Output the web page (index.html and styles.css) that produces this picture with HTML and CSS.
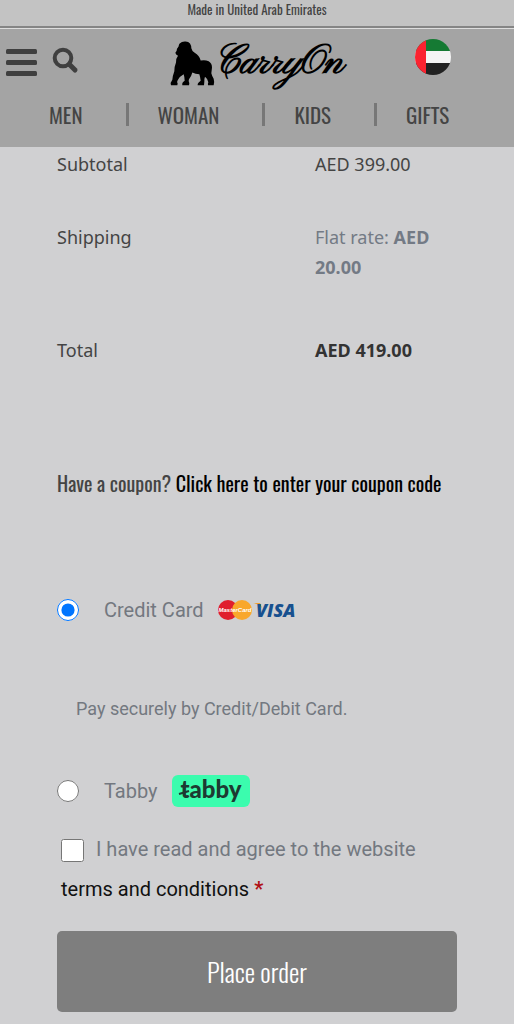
FILE: index.html
```html
<!DOCTYPE html>
<html lang="en">
<head>
    <meta charset="UTF-8">
    <meta name="viewport" content="width=device-width, initial-scale=1.0">
    <title>Checkout - CarryOn</title>
    <link rel="stylesheet" href="styles.css">
</head>
<body>
    <div class="topbar">Made in United Arab Emirates</div>

    <header class="header">
        <div class="header-row">
            <div class="header-tools">
                <button class="icon-button" type="button" aria-label="Menu">
                    <svg width="31" height="28" viewBox="0 0 31 28" fill="#3f3f3f">
                        <rect x="0" y="0" width="31" height="5" rx="1.5"/>
                        <rect x="0" y="11" width="31" height="5" rx="1.5"/>
                        <rect x="0" y="22" width="31" height="5" rx="1.5"/>
                    </svg>
                </button>
                <button class="icon-button" type="button" aria-label="Search">
                    <svg width="27" height="32" viewBox="0 0 27 32" fill="none" stroke="#3f3f3f">
                        <circle cx="11" cy="11" r="8.3" stroke-width="4"/>
                        <path d="M17.500 17.500L23 23" stroke-width="5" stroke-linecap="round"/>
                    </svg>
                </button>
            </div>

            <a class="logo" href="#" aria-label="CarryOn">
                <svg width="45" height="46" viewBox="25 20 135 137">
                    <path d="M54 30Q60 24 69 24Q80 23 85 30Q89 36 89 44Q91 53 99 58Q113 66 117 81Q130 78 141 83Q151 89 151 102Q150 112 149 119Q151 127 156 136Q159 146 156 155L139 155Q138 150 140 146Q138 136 130 130Q127 138 128 145L127 155L108 155Q107 149 117 142Q116 131 113 122Q101 122 92 117Q89 129 82 137Q79 144 83 149L82 155L62 155Q60 147 69 142Q69 131 66 122Q54 128 48 140Q44 147 48 150L47 155L28 155Q25 148 32 139Q33 126 38 113Q38 99 43 87Q43 74 49 67Q42 64 41 58Q46 53 46 46Q49 41 51 38Q51 33 54 30Z"/>
                </svg>
                <span class="logo-text">CarryOn</span>
            </a>

            <a class="flag" href="#" aria-label="United Arab Emirates">
                <svg width="36" height="36" viewBox="0 0 36 36">
                    <clipPath id="round"><circle cx="18" cy="18" r="18"/></clipPath>
                    <g clip-path="url(#round)">
                        <rect width="36" height="12" fill="#157a33"/>
                        <rect y="12" width="36" height="12" fill="#f4f4f4"/>
                        <rect y="24" width="36" height="12" fill="#222"/>
                        <rect width="11" height="36" fill="#fb2330"/>
                    </g>
                </svg>
            </a>
        </div>

        <nav>
            <ul class="nav">
                <li><a href="#">MEN</a></li>
                <li><a href="#">WOMAN</a></li>
                <li><a href="#">KIDS</a></li>
                <li><a href="#">GIFTS</a></li>
            </ul>
        </nav>
    </header>

    <main class="checkout">
        <table class="totals">
            <tr>
                <th>Subtotal</th>
                <td>AED 399.00</td>
            </tr>
            <tr class="shipping">
                <th>Shipping</th>
                <td>Flat rate: <b>AED</b> <b>20.00</b></td>
            </tr>
            <tr class="total">
                <th>Total</th>
                <td><b>AED 419.00</b></td>
            </tr>
        </table>

        <p class="coupon">Have a coupon? <a href="#">Click here to enter your coupon code</a></p>

        <form>
            <div class="method">
                <input type="radio" name="payment" id="credit" checked>
                <label for="credit">Credit Card</label>
                <svg class="cards" width="84" height="26" viewBox="0 0 84 26">
                    <circle cx="10" cy="13" r="10" fill="#e01f2d"/>
                    <circle cx="24" cy="13" r="10" fill="#f9a72b"/>
                    <text class="mastercard" x="17" y="15" text-anchor="middle">MasterCard</text>
                    <path d="M35 6h7l2 5q-3-4-9-5z" fill="#f0a030"/>
                    <text class="visa" x="38" y="20">VISA</text>
                </svg>
            </div>
            <p class="method-info">Pay securely by Credit/Debit Card.</p>

            <div class="method">
                <input type="radio" name="payment" id="tabby">
                <label for="tabby">Tabby</label>
                <svg class="tabby" width="78" height="32" viewBox="0 0 78 32">
                    <rect width="78" height="32" rx="6" fill="#3bfcae"/>
                    <text x="39" y="23" text-anchor="middle">tabby</text>
                    <path d="M7 19l10-3" stroke="#1d3a32" stroke-width="2"/>
                </svg>
            </div>

            <p class="terms">
                <input type="checkbox" id="terms">
                <label for="terms">I have read and agree to the website</label>
                <a href="#">terms and conditions</a> <span class="required">*</span>
            </p>

            <button class="place-order" type="submit">Place order</button>
        </form>
    </main>
</body>
</html>
```

FILE: styles.css
```css
* {
    box-sizing: border-box;
}
body {
    margin: 0;
    background: #d0d0d2;
    color: #444;
    font-family: Roboto, "Liberation Sans", sans-serif;
    font-size: 20px;
}
a {
    color: inherit;
    text-decoration: none;
}
.topbar,
.nav,
.coupon,
.place-order {
    font-family: Oswald, "Liberation Sans Narrow", "Roboto Condensed", sans-serif;
}
.topbar {
    height: 28px;
    background: #c3c3c3;
    border-bottom: 2px solid #858585;
    font-size: 13px;
    line-height: 18px;
    text-align: center;
}

/* header */
.header {
    background: #a4a4a4;
    border-top: 1px solid #ddd;
    height: 119px;
}
.header-row {
    display: grid;
    grid-template-columns: 1fr auto 1fr;
    align-items: center;
    height: 68px;
    padding: 0 6px;
}
.header-tools {
    display: flex;
    align-items: center;
    gap: 15px;
}
.icon-button {
    padding: 0;
    border: 0;
    background: none;
    cursor: pointer;
}
.icon-button svg,
.flag svg {
    display: block;
}
.logo {
    display: flex;
    align-items: center;
    color: #000;
}
.logo-text {
    font-family: "Pinyon Script", "Great Vibes", "Liberation Serif", serif;
    font-size: 40px;
    font-weight: bold;
    line-height: 46px;
}
.flag {
    justify-self: end;
    margin: 0 57px 12px 0;
}
.nav {
    display: flex;
    gap: 29px;
    margin: 0;
    padding: 6px 49px;
    list-style: none;
    font-size: 21px;
    line-height: 23px;
}
.nav li {
    padding-right: 43px;
    border-right: 3px solid #777;
}
.nav li:last-child {
    padding-right: 0;
    border-right: 0;
}

/* order totals */
.checkout {
    padding: 2px 57px 12px;
}
.totals {
    width: 100%;
    border-collapse: collapse;
    font-family: "Noto Sans", sans-serif;
    font-size: 18px;
    line-height: 30px;
    text-align: left;
}
.totals th {
    width: 64.5%;
    font-weight: normal;
}
.totals th,
.totals td {
    padding: 0 0 43px;
    vertical-align: top;
}
.totals .shipping td {
    padding-bottom: 53px;
    color: #737a85;
}
.totals .total td {
    color: #333;
}
.coupon {
    margin: 60px 0 96px;
    font-size: 20px;
    line-height: 30px;
}
.coupon a {
    color: #000;
}

/* payment */
.method {
    display: flex;
    align-items: center;
    height: 32px;
    color: #737880;
}
.method input {
    width: 22px;
    height: 22px;
    margin: 0 25px 0 0;
}
.cards,
.tabby {
    margin-left: 14px;
}
.mastercard {
    fill: #fff;
    font: italic bold 6px "Liberation Sans", sans-serif;
}
.visa {
    fill: #17508f;
    font: italic 900 18px "Open Sans", sans-serif;
}
.tabby text {
    fill: #1d3a32;
    font: 900 24px Lato, sans-serif;
}
.method-info {
    margin: 68px 19px 51px;
    color: #737880;
    font-size: 18px;
    line-height: 30px;
}
.terms {
    margin: 22px 4px;
    color: #737880;
    line-height: 40px;
}
.terms input {
    width: 23px;
    height: 23px;
    margin: 0 7px 0 0;
    vertical-align: middle;
}
.terms a {
    color: #111;
}
.required {
    color: #b00f14;
    font-weight: bold;
}
.place-order {
    width: 100%;
    height: 81px;
    border: 0;
    border-radius: 5px;
    background: #7e7e7e;
    color: #fff;
    font-size: 26px;
    font-weight: 300;
    cursor: pointer;
}
```
